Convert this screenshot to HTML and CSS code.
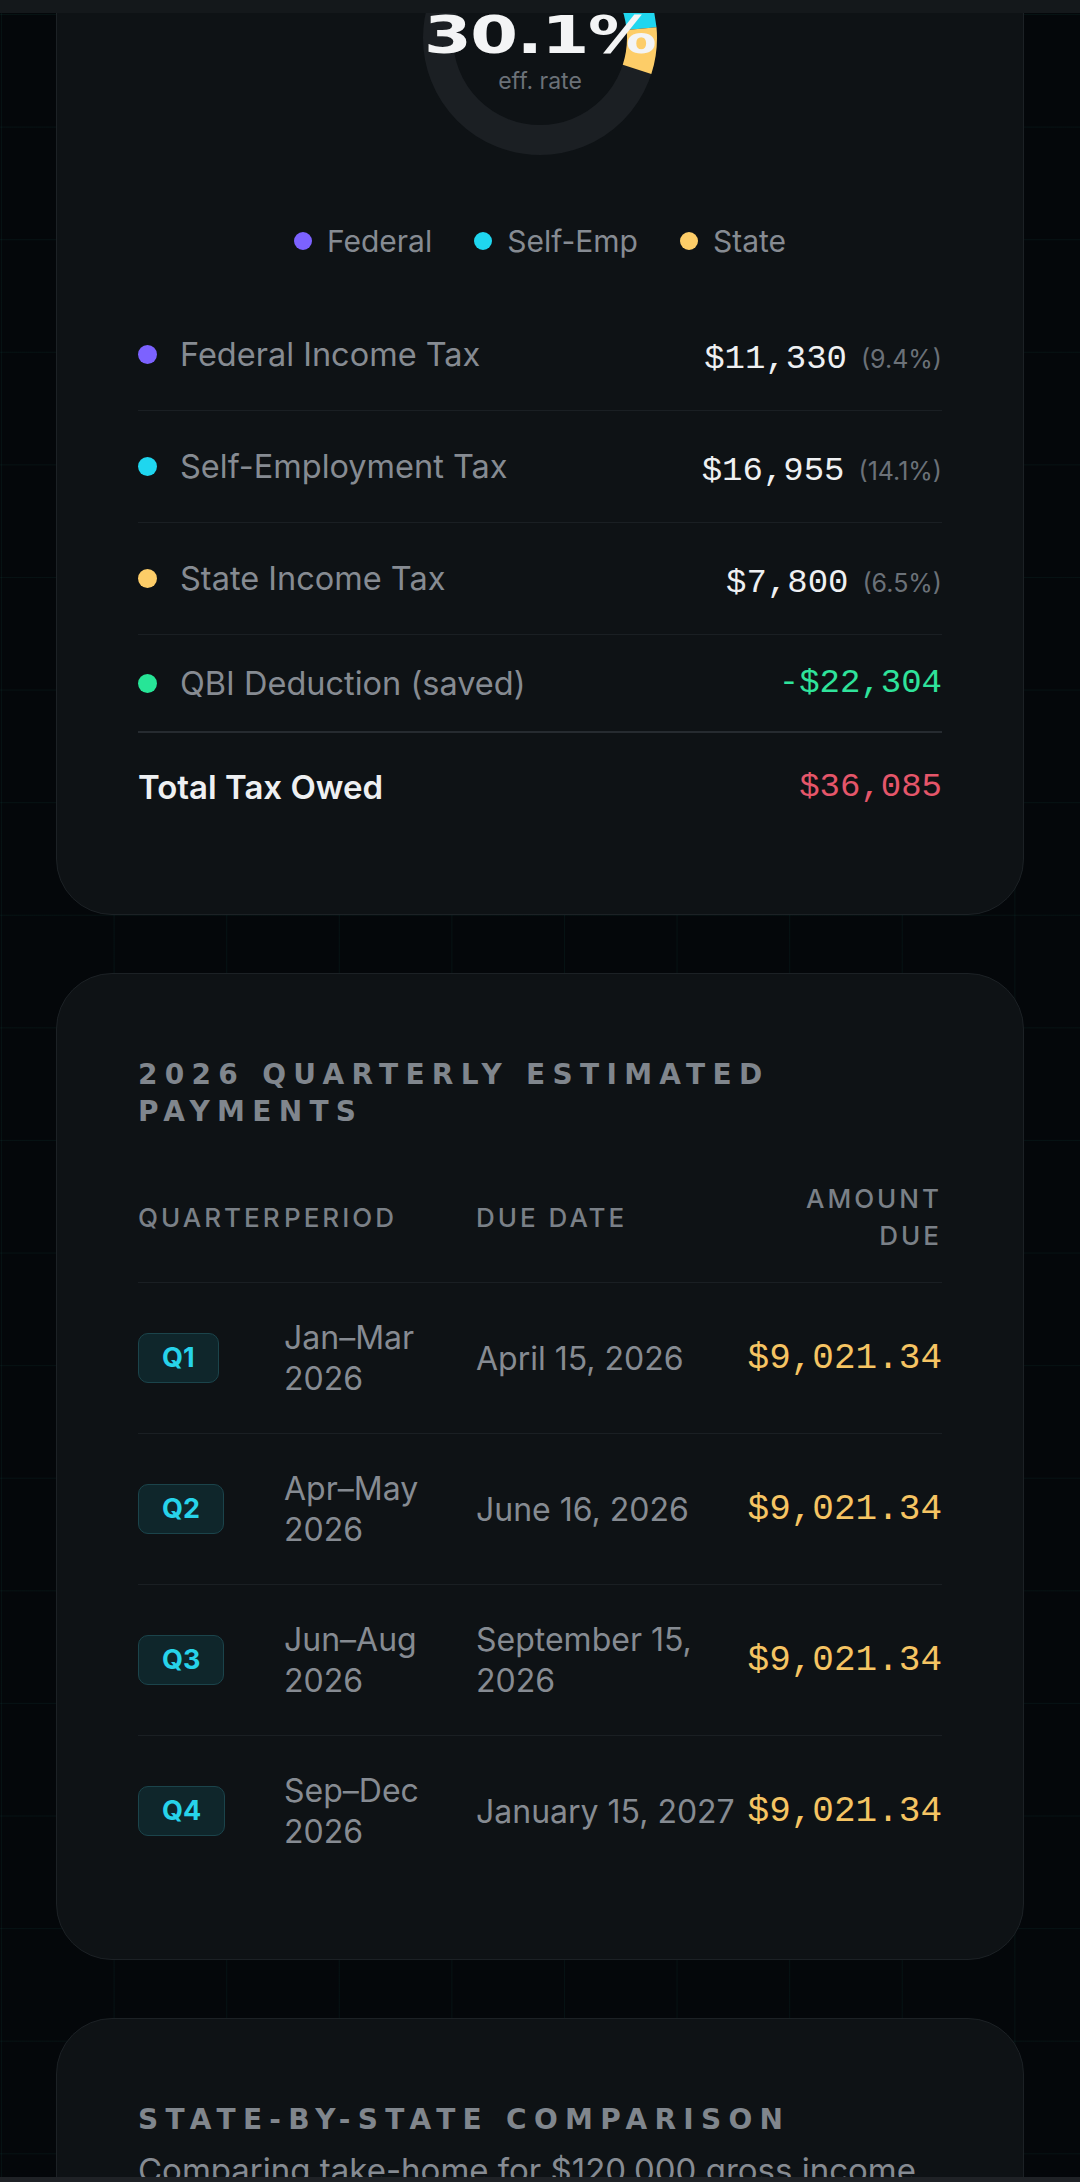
FILE: index.html
```html
<!DOCTYPE html>
<html>

<head>
  <title>Freelance Tax Estimator</title>
  <link rel="stylesheet" href="styles.css">
</head>

<body>
  <div class="topbar"></div>

  <main class="page">
    <!-- breakdown of the total tax -->
    <section class="card">
      <div class="donut">
        <svg viewBox="0 0 234 234" width="234" height="234">
          <circle cx="117" cy="117" r="102" fill="none" stroke="#1b1f23" stroke-width="30" />
          <g transform="rotate(-90 117 117)" fill="none" stroke-width="30">
            <circle cx="117" cy="117" r="102" pathLength="100" stroke="#7c62ff"
              stroke-dasharray="9.4 90.6" stroke-dashoffset="0" />
            <circle cx="117" cy="117" r="102" pathLength="100" stroke="#1fd6ef"
              stroke-dasharray="14.1 85.9" stroke-dashoffset="-9.4" />
            <circle cx="117" cy="117" r="102" pathLength="100" stroke="#fdcd68"
              stroke-dasharray="6.5 93.5" stroke-dashoffset="-23.5" />
          </g>
        </svg>
        <div class="donut-center">
          <div class="rate">30.1%</div>
          <div class="rate-label">eff. rate</div>
        </div>
      </div>

      <ul class="legend">
        <li><span class="dot dot-federal"></span>Federal</li>
        <li><span class="dot dot-self"></span>Self-Emp</li>
        <li><span class="dot dot-state"></span>State</li>
      </ul>

      <div class="tax-rows">
        <div class="tax-row">
          <div class="tax-label"><span class="dot dot-federal"></span>Federal Income Tax</div>
          <div class="tax-value"><span class="mono">$11,330</span><span class="pct">(9.4%)</span></div>
        </div>
        <div class="tax-row">
          <div class="tax-label"><span class="dot dot-self"></span>Self-Employment Tax</div>
          <div class="tax-value"><span class="mono">$16,955</span><span class="pct">(14.1%)</span></div>
        </div>
        <div class="tax-row">
          <div class="tax-label"><span class="dot dot-state"></span>State Income Tax</div>
          <div class="tax-value"><span class="mono">$7,800</span><span class="pct">(6.5%)</span></div>
        </div>
        <div class="tax-row tax-row-saved">
          <div class="tax-label"><span class="dot dot-qbi"></span>QBI Deduction (saved)</div>
          <div class="tax-value"><span class="mono saved">-$22,304</span></div>
        </div>
      </div>

      <div class="tax-total">
        <span>Total Tax Owed</span>
        <span class="mono owed">$36,085</span>
      </div>
    </section>

    <!-- quarterly payments table -->
    <section class="card">
      <h2 class="card-title">2026 Quarterly Estimated Payments</h2>
      <div class="q-table">
        <div class="q-head">
          <span>Quarter</span>
          <span>Period</span>
          <span>Due Date</span>
          <span class="right">Amount Due</span>
        </div>
        <div class="q-row">
          <span><span class="q-badge">Q1</span></span>
          <span class="q-text q-period">Jan–Mar 2026</span>
          <span class="q-text">April 15, 2026</span>
          <span class="mono q-amt">$9,021.34</span>
        </div>
        <div class="q-row">
          <span><span class="q-badge">Q2</span></span>
          <span class="q-text q-period">Apr–May 2026</span>
          <span class="q-text">June 16, 2026</span>
          <span class="mono q-amt">$9,021.34</span>
        </div>
        <div class="q-row">
          <span><span class="q-badge">Q3</span></span>
          <span class="q-text q-period">Jun–Aug 2026</span>
          <span class="q-text">September 15, 2026</span>
          <span class="mono q-amt">$9,021.34</span>
        </div>
        <div class="q-row">
          <span><span class="q-badge">Q4</span></span>
          <span class="q-text q-period">Sep–Dec 2026</span>
          <span class="q-text">January 15, 2027</span>
          <span class="mono q-amt">$9,021.34</span>
        </div>
      </div>
    </section>

    <!-- state comparison -->
    <section class="card">
      <h2 class="card-title">State-by-State Comparison</h2>
      <p class="card-sub">Comparing take-home for $120,000 gross income</p>
    </section>
  </main>

  <div class="bottombar"></div>
</body>

</html>
```

FILE: styles.css
```css
* {
  margin: 0;
  padding: 0;
  box-sizing: border-box;
}

:root {
  --bg: #04070a;
  --card: #0e1215;
  --card-border: #1c2125;
  --line: #1a1f23;
  --muted: #868b92;
  --dim: #6b7178;
  --white: #eef0f2;
}

body {
  background-color: var(--bg);
  background-image:
    linear-gradient(to right, rgba(40, 200, 170, 0.06) 1px, transparent 1px),
    linear-gradient(to bottom, rgba(40, 200, 170, 0.06) 1px, transparent 1px);
  background-size: 112.6px 112.6px;
  background-position: 1px 14px;
  font-family: "Inter", "Liberation Sans", sans-serif;
  color: var(--muted);
  overflow: hidden;
}

.topbar {
  position: fixed;
  top: 0;
  left: 0;
  right: 0;
  height: 13px;
  background: #14181b;
  z-index: 5;
}

.bottombar {
  position: fixed;
  bottom: 0;
  left: 0;
  right: 0;
  height: 5px;
  background: #1f2226;
  z-index: 5;
}

.page {
  margin-top: -162px;
}

.card {
  background: var(--card);
  border: 1px solid var(--card-border);
  border-radius: 56px;
  margin: 0 56px 58px;
  padding: 82px 81px;
}

.mono {
  font-family: "Liberation Mono", "DejaVu Sans Mono", monospace;
  font-size: 34px;
  font-weight: 400;
  color: var(--white);
}

/* donut chart */
.donut {
  position: relative;
  width: 234px;
  height: 234px;
  margin: 0 auto 69px;
}

.donut svg {
  display: block;
}

.donut-center {
  position: absolute;
  inset: 0;
  display: flex;
  flex-direction: column;
  align-items: center;
  justify-content: center;
  padding-top: 26px;
}

.rate {
  font-family: "DejaVu Sans", sans-serif;
  font-weight: 700;
  font-size: 52px;
  line-height: 52px;
  color: #f3f4f5;
  letter-spacing: -1px;
  transform: scaleX(1.32);
}

.rate-label {
  margin-top: 8px;
  font-size: 23px;
  line-height: 24px;
  color: var(--dim);
}

.legend {
  list-style: none;
  display: flex;
  justify-content: center;
  gap: 42px;
  font-size: 30px;
  line-height: 34px;
  margin-bottom: 41px;
}

.legend li {
  display: flex;
  align-items: center;
  gap: 15px;
}

.dot {
  display: inline-block;
  width: 18px;
  height: 18px;
  border-radius: 50%;
  flex-shrink: 0;
}

.dot-federal { background: #7c62ff; }
.dot-self { background: #1fd6ef; }
.dot-state { background: #fdcd68; }
.dot-qbi { background: #27e597; }

/* tax rows */
.tax-row {
  display: flex;
  justify-content: space-between;
  align-items: center;
  height: 112px;
  border-bottom: 1px solid var(--line);
}

.tax-row-saved {
  height: 96px;
  border-bottom: 0;
}

.tax-label {
  display: flex;
  align-items: center;
  gap: 23px;
  font-size: 32.5px;
}

.tax-label .dot {
  width: 19px;
  height: 19px;
}

.tax-value {
  display: flex;
  align-items: baseline;
  gap: 14px;
  padding-top: 8px;
}

.tax-row-saved .tax-value {
  padding-top: 0;
}

.pct {
  font-size: 25px;
  color: var(--dim);
}

.saved { color: #2fe39b; }
.owed { color: #e5566a; }

.tax-total {
  display: flex;
  justify-content: space-between;
  align-items: center;
  border-top: 2px solid #262b30;
  padding: 32px 0 22px;
  line-height: 45px;
  font-size: 33px;
  font-weight: 600;
  color: var(--white);
}

/* section titles */
.card-title {
  font-family: "DejaVu Sans", sans-serif;
  font-weight: 700;
  font-size: 28px;
  line-height: 37px;
  letter-spacing: 7.3px;
  text-transform: uppercase;
  color: #80868d;
}

.card-sub {
  margin-top: 12px;
  font-size: 33px;
  line-height: 41px;
  color: var(--muted);
}

/* quarterly table */
.q-table {
  margin-top: 24px;
}

.q-head,
.q-row {
  display: grid;
  grid-template-columns: 146px 192px 1fr min-content;
  align-items: center;
  border-bottom: 1px solid var(--line);
}

.q-head {
  padding: 26px 0 28px;
  font-size: 26px;
  line-height: 37px;
  font-weight: 500;
  letter-spacing: 3px;
  text-transform: uppercase;
  color: #7a8087;
}

.q-row {
  padding: 34px 0;
}

.q-row:last-child {
  border-bottom: 0;
  padding-bottom: 25px;
}

.right {
  text-align: right;
}

.q-badge {
  display: inline-block;
  padding: 0 23px;
  height: 50px;
  line-height: 47px;
  border: 1.5px solid #1b444b;
  border-radius: 10px;
  background: #0f262b;
  color: #27d3ea;
  font-size: 27px;
  font-weight: 700;
}

.q-text {
  font-size: 32px;
  line-height: 41px;
  color: var(--muted);
}

.q-period {
  padding-right: 14px;
}

.q-amt {
  font-size: 36px;
  color: #f5c463;
  text-align: right;
  white-space: nowrap;
}
```
